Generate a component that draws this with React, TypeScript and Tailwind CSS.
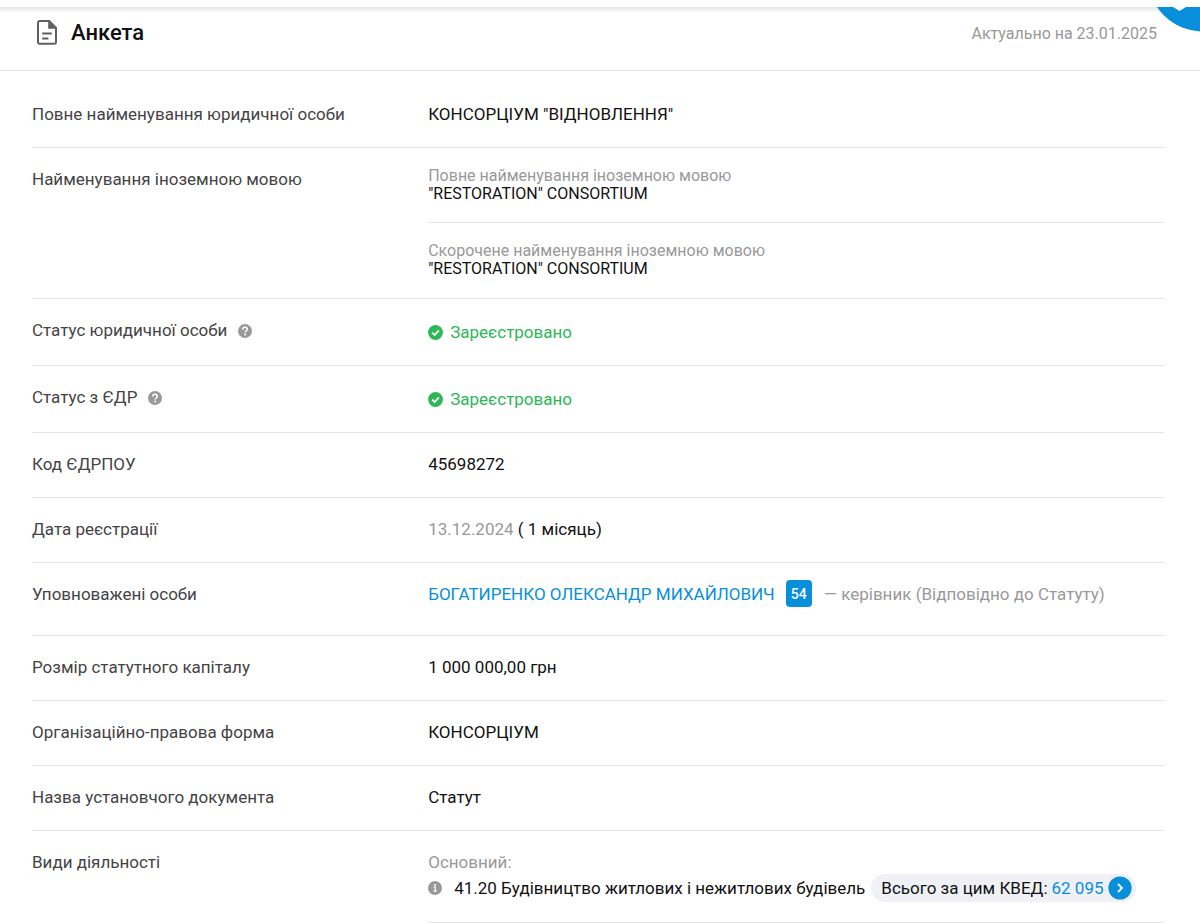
import type { ReactNode } from 'react';

interface RowProps {
  label: string;
  hint?: boolean;
  last?: boolean;
  children: ReactNode;
}

function HintIcon() {
  return (
    <button type="button" aria-label="Довідка" className="ml-[11px] shrink-0 cursor-pointer">
      <svg viewBox="0 0 14 14" className="h-3.5 w-3.5">
        <circle cx="7" cy="7" r="7" fill="#999" />
        <path
          d="M4.7 5.5C4.7 4.1 5.7 3.2 7 3.2S9.3 4.1 9.3 5.3C9.3 6.7 7.2 6.8 7.2 8.6"
          fill="none"
          stroke="#fff"
          strokeWidth="1.5"
        />
        <circle cx="7.2" cy="10.6" r="1" fill="#fff" />
      </svg>
    </button>
  );
}

function InfoIcon() {
  return (
    <svg viewBox="0 0 14 14" className="h-3.5 w-3.5 shrink-0">
      <circle cx="7" cy="7" r="7" fill="#999" />
      <circle cx="7" cy="3.9" r="1" fill="#fff" />
      <path d="M5.7 6.2H7.2V10M5.6 10.2H8.6" fill="none" stroke="#fff" strokeWidth="1.2" />
    </svg>
  );
}

function DocumentIcon() {
  return (
    <svg viewBox="0 0 20 25" className="h-[25px] w-5 shrink-0" fill="none" stroke="#5f5f5f" strokeWidth="2">
      <path d="M2.8 1H12.2L19 7.8V22.2A1.6 1.6 0 0 1 17.4 23.8H2.6A1.6 1.6 0 0 1 1 22.2V2.8A1.8 1.8 0 0 1 2.8 1Z" />
      <path d="M11.2 1V8.8H19Z" fill="#5f5f5f" stroke="none" />
      <path d="M5.2 13.6H14.8M5.2 18.4H11.4" />
    </svg>
  );
}

function Row({ label, hint, last, children }: RowProps) {
  return (
    <div className={`grid grid-cols-[35%_1fr] ${last ? '' : 'border-b border-[#e4e4e4]'}`}>
      <dt className="flex items-start pt-[19px] pb-5 text-[#444]">
        <span className="flex items-center">
          {label}
          {hint && <HintIcon />}
        </span>
      </dt>
      <dd className="pt-[19px] pb-5 text-[#111]">{children}</dd>
    </div>
  );
}

function Status() {
  return (
    <div className="flex items-center gap-[7px] pt-[2px] text-[#2db757]">
      <svg viewBox="0 0 15 15" className="h-[15px] w-[15px] shrink-0">
        <circle cx="7.5" cy="7.5" r="7.4" fill="#2db757" />
        <path d="M4.2 7.7L6.6 10L10.9 5.4" fill="none" stroke="#fff" strokeWidth="1.8" />
      </svg>
      Зареєстровано
    </div>
  );
}

export default function App() {
  return (
    <main className="bg-white pt-[7px] font-['Roboto',sans-serif] text-[17px] leading-[25px]">
      <section className="relative overflow-hidden">
        <div className="h-[5px] bg-gradient-to-b from-[#e6e6e6] to-[#fbfbfb]" />
        <header className="flex h-[59px] items-start justify-between border-b border-[#e4e4e4] pt-2 pr-[43px] pl-[37px]">
          <div className="flex items-center gap-3.5">
            <DocumentIcon />
            <h1 className="text-[22px] font-medium text-[#111]">Анкета</h1>
          </div>
          <p className="pt-0.5 text-base text-[#999]">Актуально на 23.01.2025</p>
        </header>
        <svg viewBox="0 0 44 25" className="absolute top-0 right-0 h-[25px] w-11">
          <circle cx="47" cy="-31" r="55.5" fill="#078fdb" />
          <path d="M17 0L23.5 4L30 0Z" fill="#fff" />
        </svg>

        <dl className="pt-3 pr-9 pl-8">
          <Row label="Повне найменування юридичної особи">КОНСОРЦІУМ "ВІДНОВЛЕННЯ"</Row>
          <Row label="Найменування іноземною мовою">
            <div className="border-b border-[#e4e4e4] pb-[19px] text-base leading-[18px]">
              <p className="text-[#999]">Повне найменування іноземною мовою</p>
              <p>"RESTORATION" CONSORTIUM</p>
            </div>
            <div className="pt-[19px] text-base leading-[18px]">
              <p className="text-[#999]">Скорочене найменування іноземною мовою</p>
              <p>"RESTORATION" CONSORTIUM</p>
            </div>
          </Row>
          <Row label="Статус юридичної особи" hint>
            <Status />
          </Row>
          <Row label="Статус з ЄДР" hint>
            <Status />
          </Row>
          <Row label="Код ЄДРПОУ">45698272</Row>
          <Row label="Дата реєстрації">
            <span className="text-[#999]">13.12.2024</span> ( 1 місяць)
          </Row>
          <Row label="Уповноважені особи">
            <div className="mb-2 flex h-[25px] items-center text-[#999]">
              <a href="#person" className="text-[#078fdb]">
                БОГАТИРЕНКО ОЛЕКСАНДР МИХАЙЛОВИЧ
              </a>
              <a
                href="#links"
                className="mr-3 mb-0.5 ml-[11px] flex h-[27px] w-[26px] items-center justify-center rounded bg-[#078fdb] text-sm leading-none font-medium text-white"
              >
                54
              </a>
              — керівник (Відповідно до Статуту)
            </div>
          </Row>
          <Row label="Розмір статутного капіталу">1 000 000,00 грн</Row>
          <Row label="Організаційно-правова форма">КОНСОРЦІУМ</Row>
          <Row label="Назва установчого документа">Статут</Row>
          <Row label="Види діяльності" last>
            <div className="border-b border-[#e4e4e4] pb-5">
              <p className="leading-6 text-[#999]">Основний:</p>
              <div className="flex items-center">
                <InfoIcon />
                <span className="ml-3">41.20 Будівництво житлових і нежитлових будівель</span>
                <a href="#kved" className="ml-1.5 flex h-7 items-center rounded-full bg-[#eff1f7] pr-1 pl-2.5">
                  Всього за цим КВЕД:
                  <span className="ml-1 text-[#078fdb]">62 095</span>
                  <svg viewBox="0 0 24 24" className="ml-1 h-6 w-6">
                    <circle cx="12" cy="12" r="11.6" fill="#078fdb" />
                    <path d="M10 8L14 12L10 16" fill="none" stroke="#fff" strokeWidth="1.8" />
                  </svg>
                </a>
              </div>
            </div>
          </Row>
        </dl>
      </section>
    </main>
  );
}
